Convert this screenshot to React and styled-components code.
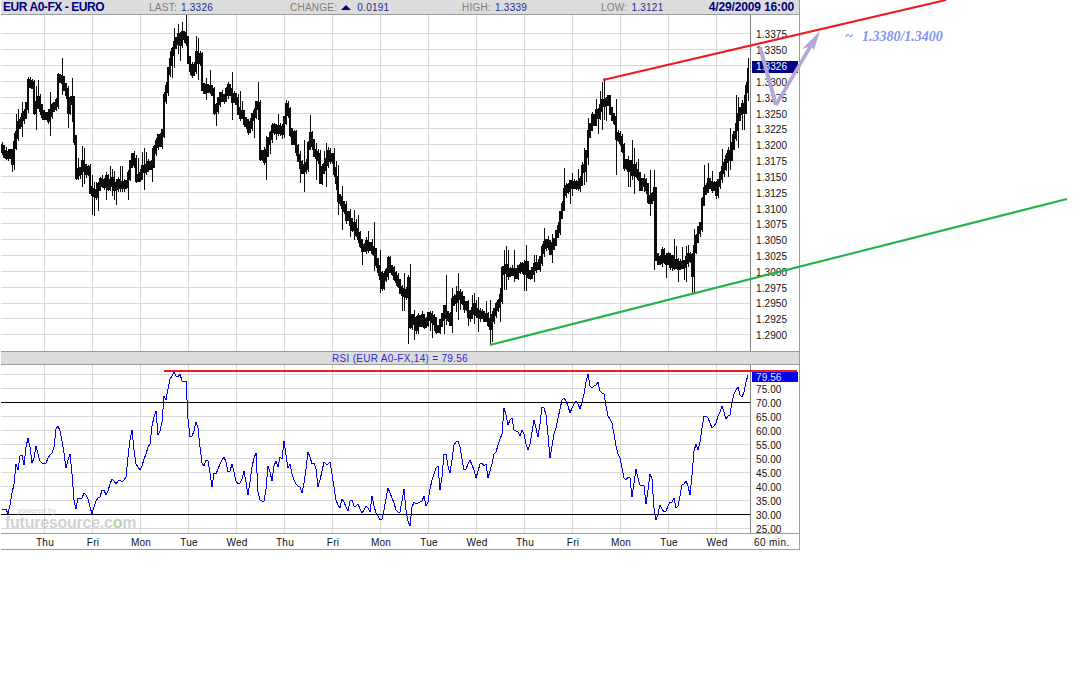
import React from 'react';
import styled, { createGlobalStyle } from 'styled-components';

const GlobalStyle = createGlobalStyle`
  html, body {
    margin: 0;
    padding: 0;
    background: #fff;
  }
`;

// price path traced off the chart, [x, y] in page pixels
const PRICE_PATH = [
  [2,148],[8,155],[12,158],[14,146],[16,135],[20,122],[25,112],[28,87],[32,88],[34,110],[37,96],[40,110],[44,112],[48,115],
  [52,105],[56,103],[58,76],[62,82],[66,90],[68,106],[72,100],[74,142],[76,175],[79,168],[84,166],[88,170],[91,195],[95,193],
  [100,185],[105,183],[110,182],[115,183],[120,182],[125,183],[128,177],[132,158],[134,158],[135,177],[140,178],[144,165],
  [148,165],[152,163],[155,145],[160,140],[163,130],[164,100],[168,75],[171,53],[174,45],[178,41],[181,37],[186,39],[188,62],
  [192,70],[197,55],[200,60],[202,85],[206,92],[210,85],[212,95],[214,110],[219,100],[223,95],[228,92],[232,98],[236,103],
  [240,115],[245,118],[249,130],[254,113],[258,102],[259,155],[265,158],[270,133],[275,130],[283,130],[286,104],[288,112],
  [291,138],[295,135],[297,160],[300,165],[304,170],[306,165],[309,137],[312,145],[318,160],[320,177],[324,165],[328,157],
  [332,160],[335,174],[338,198],[342,205],[345,213],[350,218],[355,231],[360,243],[365,248],[370,245],[373,250],[376,258],
  [381,283],[385,275],[388,265],[392,270],[396,280],[400,290],[405,295],[408,285],[410,320],[415,325],[420,320],[425,320],
  [430,318],[435,325],[440,326],[445,308],[450,325],[452,305],[456,298],[460,295],[465,305],[470,315],[475,310],[480,318],
  [485,315],[490,322],[495,310],[500,300],[502,270],[505,265],[510,272],[515,272],[520,270],[525,268],[530,275],[535,267],
  [540,260],[545,243],[550,250],[555,237],[560,217],[565,185],[570,187],[575,188],[580,180],[585,160],[590,123],[595,118],
  [600,107],[604,100],[608,103],[612,118],[614,122],[617,140],[620,140],[625,167],[630,167],[635,170],[640,187],[645,183],
  [650,203],[654,190],[655,260],[660,257],[665,257],[670,260],[675,263],[680,267],[685,263],[690,260],[692,273],[695,243],
  [700,223],[703,193],[708,180],[712,183],[716,190],[720,177],[725,160],[730,155],[735,127],[740,110],[745,107],[747,77],[749,62],
];

// single long wicks that stand out, x -> [top, bottom]
const SPIKES = {
  62: [58, 95], 72: [78, 122], 76: [140, 180], 92: [175, 215], 94: [182, 216], 106: [172, 200], 144: [148, 190], 178: [24, 50], 182: [22, 48],
  198: [38, 80], 258: [82, 120], 266: [150, 180], 286: [100, 120], 304: [140, 192], 316: [145, 180], 342: [190, 230],
  374: [222, 270], 380: [250, 293], 408: [280, 344], 414: [310, 340], 446: [275, 325], 458: [273, 320], 500: [288, 322],
  490: [300, 345], 504: [250, 290], 506: [246, 285], 514: [250, 282], 564: [168, 200], 588: [118, 165], 602: [82, 130],
  604: [78, 120], 616: [118, 175], 632: [140, 180], 650: [170, 216], 654: [170, 270], 686: [246, 282], 691: [240, 293],
  704: [165, 205], 730: [128, 170], 736: [95, 132], 742: [100, 130], 744: [120, 130], 748: [58, 100],
};

const RSI_LEFT = [
  [5,515],[8,495],[12,512],[20,512],[25,525],[30,490],[35,460],[42,435],[45,400],[50,352],[55,405],[62,330],[70,355],[73,380],[80,300],[85,292],
  [92,340],[98,378],[108,322],[120,360],[135,375],[150,340],[160,338],[170,252],[178,265],[185,295],[192,335],[200,400],[205,345],[212,345],
  [220,460],[225,505],[230,508],[235,470],[248,470],[255,455],[265,480],[275,522],[285,490],[300,468],[308,442],[318,468],[335,420],[338,405],
  [345,432],[358,420],[365,428],[378,410],[385,340],[392,290],[397,262],[405,370],[422,397],[435,345],[450,312],[458,245],[468,215],[475,298],
  [488,240],[493,148],[498,180],[510,115],[522,97],[530,118],[540,105],[545,127],[558,124],[563,230],[570,290],[580,285],[590,235],[598,300],
  [605,370],[615,385],[620,345],[628,385],[637,450],[643,385],[650,410],[658,370],[670,362],[674,345],[685,402],[697,372],[710,430],[722,430],
  [733,392],[745,470],[757,370],[768,335],[775,470],[785,480],[795,488],[805,365],[815,428],[825,360],[835,380],[840,355],[848,355],[853,292],
  [862,385],[870,375],[885,430],[900,440],[908,460],[925,328],[938,378],[945,360],[955,445],[965,402],[970,370],[990,370],[1000,430],[1010,490],
  [1020,505],[1028,475],[1045,515],[1052,467],[1060,500],[1075,495],[1085,525],[1100,490],[1110,515],[1117,460],[1125,518],[1145,547],[1165,438],
  [1190,520],[1200,515],
];

const RSI_RIGHT = [
  [12,450],[20,535],[30,560],[38,480],[50,490],[62,490],[72,470],[80,510],[95,420],[113,368],[122,470],[130,345],[138,345],[150,403],[162,315],
  [175,298],[195,400],[210,357],[228,410],[240,375],[258,372],[265,418],[280,352],[300,300],[303,320],[312,205],[325,258],[335,225],[345,285],[350,268],
  [360,285],[368,265],[378,312],[385,335],[402,238],[415,300],[427,190],[440,235],[450,352],[462,285],[490,165],[510,215],[530,178],[542,208],
  [565,97],[572,150],[595,125],[602,170],[610,148],[620,215],[640,260],[645,310],[665,375],[672,418],[690,410],[697,480],[707,388],[722,440],
  [730,425],[738,490],[750,405],[757,425],[765,555],[780,497],[790,518],[800,505],[822,475],[830,518],[847,430],[860,425],[870,465],[885,305],
  [895,335],[912,225],[925,232],[938,272],[968,198],[975,235],[990,225],[1000,165],[1015,137],[1022,180],[1035,145],[1040,107],[1047,105],
];

const rsiTrace = [
  ...RSI_LEFT.map(([x, y]) => [x / 3, y / 3 + 340]),
  ...RSI_RIGHT.map(([x, y]) => [400 + x / 3, y / 3 + 340]),
];

let seed = 4292009;
const rand = () => {
  seed = (seed * 16807) % 2147483647;
  return seed / 2147483647;
};

const interpolate = (path, x) => {
  for (let i = 1; i < path.length; i++) {
    const [x0, y0] = path[i - 1];
    const [x1, y1] = path[i];
    if (x <= x1) return y0 + ((y1 - y0) * (x - x0)) / (x1 - x0 || 1);
  }
  return path[path.length - 1][1];
};

const makeBars = () => {
  const wicks = [];
  const bodies = [];
  let prev = interpolate(PRICE_PATH, 2);
  for (let x = 2; x <= 748; x += 2) {
    const mid = interpolate(PRICE_PATH, x) + (rand() - 0.5) * 8;
    const big = rand() > 0.6 ? 5 + rand() * 11 : 0;
    let top = Math.min(mid, prev) - 3 - rand() * 4 - (rand() > 0.5 ? big : 0);
    let bottom = Math.max(mid, prev) + 3 + rand() * 4 + (rand() > 0.5 ? big : 0);
    if (SPIKES[x]) {
      top = Math.min(top, SPIKES[x][0]);
      bottom = Math.max(bottom, SPIKES[x][1]);
    }
    wicks.push(`M${x} ${Math.round(top)}V${Math.round(bottom)}`);
    bodies.push(`M${x} ${Math.round(Math.min(mid, prev) - 4)}V${Math.round(Math.max(mid, prev) + 4)}`);
    prev = mid;
  }
  return { wicks: wicks.join(''), bodies: bodies.join('') };
};

const bars = makeBars();

const range = (from, to, step) => {
  const out = [];
  for (let v = from; v <= to; v += step) out.push(v);
  return out;
};

// one reading per hourly bar, keeps the line's stepped look
const rsiPoints = range(2, 748, 2).map((x) => {
  const y = interpolate(rsiTrace, x) + (rand() - 0.5) * 3;
  return `${x},${Math.round(Math.max(y, 372))}`;
}).join(' ');

const GRID_X = range(44, 716, 48);
const PRICE_GRID_Y = range(0, 19, 1).map((i) => Math.round(33.3 + i * 15.84));
const RSI_GRID_Y = range(0, 11, 1).map((i) => 374 + i * 14).filter((y) => y !== 402 && y !== 514);

const PRICE_LABELS = [
  '1.3375', '1.3350', null, '1.3300', '1.3275', '1.3250', '1.3225', '1.3200', '1.3175', '1.3150', '1.3125',
  '1.3100', '1.3075', '1.3050', '1.3025', '1.3000', '1.2975', '1.2950', '1.2925', '1.2900',
];
const RSI_LABELS = ['75.00', '70.00', '65.00', '60.00', '55.00', '50.00', '45.00', '40.00', '35.00', '30.00', '25.00'];
const DAYS = ['Thu', 'Fri', 'Mon', 'Tue', 'Wed', 'Thu', 'Fri', 'Mon', 'Tue', 'Wed', 'Thu', 'Fri', 'Mon', 'Tue', 'Wed'];

const Page = styled.div`
  position: relative;
  width: 1088px;
  height: 693px;
  overflow: hidden;
  background: #fff;
  font-family: "Liberation Sans", Arial, sans-serif;
`;

const ChartCard = styled.div`
  box-sizing: border-box;
  width: 799px;
  height: 550px;
  margin-left: 1px;
  border-right: 1px solid #9c9c9c;
  display: flex;
  flex-direction: column;
`;

const HeaderBar = styled.div`
  box-sizing: border-box;
  height: 15px;
  flex-shrink: 0;
  background: #dcdcdc;
  border-bottom: 1px solid #9c9c9c;
  padding: 0 5px 0 2px;
  display: flex;
  align-items: center;
  white-space: nowrap;
`;

const Title = styled.div`
  width: 146px;
  font-size: 12px;
  font-weight: bold;
  letter-spacing: -0.45px;
  color: #000080;
`;

const Stat = styled.div`
  width: ${(p) => p.$w}px;
  display: flex;
  align-items: center;
  font-size: 10px;
  letter-spacing: 0.25px;
  color: #7c7c7c;
`;

const StatValue = styled.span`
  margin-left: ${(p) => p.$gap || 4}px;
  color: #1c2c8c;
`;

const UpArrow = styled.span`
  width: 0;
  height: 0;
  margin-left: 4px;
  border-left: 5px solid transparent;
  border-right: 5px solid transparent;
  border-bottom: 5px solid #000080;
`;

const Stamp = styled.div`
  margin-left: auto;
  font-size: 12px;
  font-weight: bold;
  letter-spacing: -0.15px;
  color: #000080;
`;

const PlotRow = styled.div`
  position: relative;
  height: ${(p) => p.$h}px;
  flex-shrink: 0;
  display: flex;
`;

const Plot = styled.svg`
  display: block;
  width: 749px;
  height: 100%;
  flex-shrink: 0;
`;

const AxisColumn = styled.div`
  box-sizing: border-box;
  flex: 1;
  border-left: 1px solid #808080;
  padding: ${(p) => p.$top}px 1px 0 1px;
  display: grid;
  grid-auto-rows: ${(p) => p.$step}px;
  align-content: start;
  font-size: 10px;
  letter-spacing: 0.1px;
  color: #111;
`;

const AxisLabel = styled.div`
  padding-left: 4px;
  display: flex;
  align-items: center;
`;

const PriceTag = styled.div`
  height: 12px;
  align-self: center;
  padding-left: 4px;
  display: flex;
  align-items: center;
  background: #000080;
  color: #fff;
`;

const RsiTag = styled(PriceTag)`
  height: 10px;
  align-self: end;
  background: #0000ee;
  color: #e8e8ff;
`;

const StudyBar = styled.div`
  box-sizing: border-box;
  height: 14px;
  flex-shrink: 0;
  background: #dcdcdc;
  border-top: 1px solid #9c9c9c;
  border-bottom: 1px solid #9c9c9c;
  display: flex;
  align-items: center;
  justify-content: center;
  font-size: 10px;
  letter-spacing: 0.3px;
  color: #2a2ad0;
`;

const TimeAxis = styled.div`
  box-sizing: border-box;
  height: 17px;
  flex-shrink: 0;
  border-top: 1px solid #9c9c9c;
  border-bottom: 1px solid #9c9c9c;
  padding: 1px 0 0 20px;
  display: flex;
  align-items: center;
  font-size: 10px;
  letter-spacing: 0.25px;
  color: #111;
`;

const DayGrid = styled.div`
  display: grid;
  grid-template-columns: repeat(15, 48px);
  text-align: center;
`;

const Interval = styled.div`
  margin-left: 13px;
  white-space: nowrap;
  letter-spacing: 0.4px;
`;

const Watermark = styled.div`
  position: absolute;
  left: 4px;
  bottom: 2px;
  font-size: 16px;
  line-height: 17px;
  font-weight: bold;
  letter-spacing: -0.25px;
  color: rgba(170, 170, 170, 0.55);
  pointer-events: none;
`;

const WatermarkDot = styled.span`
  color: rgba(150, 190, 120, 0.7);
`;

const PoweredBy = styled.div`
  position: absolute;
  left: 12px;
  top: -7px;
  font-size: 7px;
  line-height: 8px;
  letter-spacing: 0;
  color: rgba(190, 190, 190, 0.6);
`;

const Markup = styled.svg`
  position: absolute;
  left: 0;
  top: 0;
  pointer-events: none;
`;

const Target = styled.div`
  position: absolute;
  left: 845px;
  top: 29px;
  font-family: "Liberation Serif", "Times New Roman", serif;
  font-size: 14px;
  font-style: italic;
  font-weight: bold;
  white-space: pre;
  word-spacing: 1px;
  color: #7f93ee;
`;

const GridLines = ({ rows, top, bottom }) => (
  <g stroke="#d9d9d9" strokeWidth="1" shapeRendering="crispEdges">
    {GRID_X.map((x) => (
      <line key={x} x1={x + 0.5} x2={x + 0.5} y1={top} y2={bottom} />
    ))}
    {rows.map((y) => (
      <line key={y} x1="1" x2="750" y1={y + 0.5} y2={y + 0.5} />
    ))}
  </g>
);

const App = () => (
  <Page>
    <GlobalStyle />
    <ChartCard>
      <HeaderBar>
        <Title>EUR A0-FX - EURO</Title>
        <Stat $w={141}>
          LAST:<StatValue>1.3326</StatValue>
        </Stat>
        <Stat $w={172}>
          CHANGE:<UpArrow /><StatValue $gap={6}>0.0191</StatValue>
        </Stat>
        <Stat $w={139}>
          HIGH:<StatValue>1.3339</StatValue>
        </Stat>
        <Stat $w={100}>
          LOW:<StatValue>1.3121</StatValue>
        </Stat>
        <Stamp>4/29/2009 16:00</Stamp>
      </HeaderBar>

      <PlotRow $h={336}>
        <Plot viewBox="1 15 749 336">
          <GridLines rows={PRICE_GRID_Y} top={15} bottom={351} />
          <g stroke="#0c0c0c" fill="none" shapeRendering="crispEdges">
            <path d={bars.wicks} strokeWidth="1" />
            <path d={bars.bodies} strokeWidth="2" />
          </g>
        </Plot>
        <AxisColumn $top={12} $step={15.84}>
          {PRICE_LABELS.map((label, i) =>
            label ? <AxisLabel key={i}>{label}</AxisLabel> : <PriceTag key={i}>1.3326</PriceTag>
          )}
        </AxisColumn>
      </PlotRow>

      <StudyBar>RSI (EUR A0-FX,14) = 79.56</StudyBar>

      <PlotRow $h={168}>
        <Plot viewBox="1 365 749 168">
          <GridLines rows={RSI_GRID_Y} top={365} bottom={533} />
          <g stroke="#000" strokeWidth="1" shapeRendering="crispEdges">
            <line x1="1" x2="750" y1="402.5" y2="402.5" />
            <line x1="1" x2="750" y1="514.5" y2="514.5" />
          </g>
          <polyline points={rsiPoints} fill="none" stroke="#0000f0" strokeWidth="1" shapeRendering="crispEdges" />
        </Plot>
        <AxisColumn $top={3} $step={14}>
          <RsiTag>79.56</RsiTag>
          {RSI_LABELS.map((label) => (
            <AxisLabel key={label}>{label}</AxisLabel>
          ))}
        </AxisColumn>
        <Watermark>
          <PoweredBy>powered by</PoweredBy>
          futuresource.c<WatermarkDot>o</WatermarkDot>m
        </Watermark>
      </PlotRow>

      <TimeAxis>
        <DayGrid>
          {DAYS.map((day, i) => (
            <div key={i}>{day}</div>
          ))}
        </DayGrid>
        <Interval>60 min.</Interval>
      </TimeAxis>
    </ChartCard>

    {/* lines drawn by hand on top of the chart */}
    <Markup width="1088" height="693" viewBox="0 0 1088 693">
      <g fill="none" stroke="#b3a7d6">
        <polyline points="760,47 776,105" strokeWidth="4" />
        <polyline points="776,105 813,42" strokeWidth="3.5" />
      </g>
      <path d="M820 31 L802 49 L811 46 L814 50 Z" fill="#b3a7d6" />
      <g strokeWidth="2.1" fill="none">
        <line x1="603" y1="80" x2="946" y2="0" stroke="#ed1c24" />
        <line x1="490" y1="345" x2="1067" y2="199" stroke="#22b14c" />
      </g>
      <line x1="164" y1="371" x2="797" y2="371" stroke="#ed1c24" strokeWidth="2" shapeRendering="crispEdges" />
    </Markup>
    <Target>{'~  1.3380/1.3400'}</Target>
  </Page>
);

export default App;
